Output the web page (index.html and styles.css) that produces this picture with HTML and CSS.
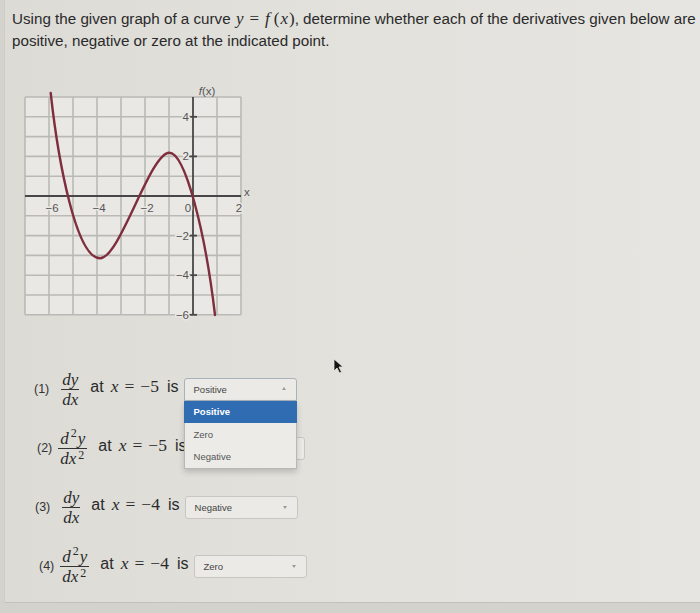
FILE: index.html
```html
<!DOCTYPE html>
<html>
<head>
<meta charset="utf-8">
<link rel="stylesheet" href="styles.css">
</head>
<body>
<div class="frame">
  <p class="intro">Using the given graph of a curve <span class="hm"><i>y</i><span class="eq">=</span><i class="fn">f</i>(<i class="vx">x</i>)</span>, determine whether each of the derivatives given below are positive, negative or zero at the indicated point.</p>

  <svg class="graph" width="260" height="244" viewBox="0 0 260 244">
    <rect x="15" y="17" width="216" height="217.8" fill="#e9e8e4"/>
    <g stroke="#bab9b5" stroke-width="1.6">
      <line x1="15" y1="17" x2="15" y2="234.8"/>
      <line x1="39" y1="17" x2="39" y2="234.8"/>
      <line x1="63" y1="17" x2="63" y2="234.8"/>
      <line x1="87" y1="17" x2="87" y2="234.8"/>
      <line x1="111" y1="17" x2="111" y2="234.8"/>
      <line x1="135" y1="17" x2="135" y2="234.8"/>
      <line x1="159" y1="17" x2="159" y2="234.8"/>
      <line x1="207" y1="17" x2="207" y2="234.8"/>
      <line x1="231" y1="17" x2="231" y2="234.8"/>
      <line x1="15" y1="17" x2="231" y2="17"/>
      <line x1="15" y1="36.8" x2="231" y2="36.8"/>
      <line x1="15" y1="56.6" x2="231" y2="56.6"/>
      <line x1="15" y1="76.4" x2="231" y2="76.4"/>
      <line x1="15" y1="96.2" x2="231" y2="96.2"/>
      <line x1="15" y1="135.8" x2="231" y2="135.8"/>
      <line x1="15" y1="155.6" x2="231" y2="155.6"/>
      <line x1="15" y1="175.4" x2="231" y2="175.4"/>
      <line x1="15" y1="195.2" x2="231" y2="195.2"/>
      <line x1="15" y1="215" x2="231" y2="215"/>
      <line x1="15" y1="234.8" x2="231" y2="234.8"/>
    </g>
    <g stroke="#474747" stroke-width="1.8">
      <line x1="15" y1="116" x2="231" y2="116"/>
      <line x1="183" y1="17" x2="183" y2="234.8"/>
      <line x1="179" y1="36.8" x2="187" y2="36.8"/>
      <line x1="179" y1="76.4" x2="187" y2="76.4"/>
      <line x1="179" y1="155.6" x2="187" y2="155.6"/>
      <line x1="179" y1="195.2" x2="187" y2="195.2"/>
      <line x1="179" y1="234.8" x2="187" y2="234.8"/>
    </g>
    <g font-size="11.5" fill="#555" stroke="#e9e8e4" stroke-width="3" paint-order="stroke">
      <text x="42" y="132" text-anchor="middle">−6</text>
      <text x="89" y="132" text-anchor="middle">−4</text>
      <text x="137" y="132" text-anchor="middle">−2</text>
      <text x="178" y="132" text-anchor="middle">0</text>
      <text x="229" y="132" text-anchor="middle">2</text>
      <text x="179" y="40.8" text-anchor="end">4</text>
      <text x="179" y="80.4" text-anchor="end">2</text>
      <text x="179" y="159.6" text-anchor="end">−2</text>
      <text x="179" y="199.2" text-anchor="end">−4</text>
      <text x="179" y="238.8" text-anchor="end">−6</text>
    </g>
    <text x="197" y="15" font-size="11.5" fill="#555" text-anchor="middle"><tspan font-style="italic">f</tspan>(x)</text>
    <text x="234" y="116" font-size="11.5" fill="#555">x</text>
    <path d="M40.7,13 C48,80 66,178.3 90,178.3 C110,178.3 140,72.7 159.3,72.7 C175,72.7 195,150 205,235" fill="none" stroke="#7f2e3d" stroke-width="2.4" stroke-linecap="round"/>
  </svg>

  <div class="qs">
    <div class="q q1">
      <span class="num">(1)</span>
      <span class="frac"><span class="top">dy</span><span class="bot">dx</span></span>
      <span class="txt">at<span class="m"><i>x</i><span class="eq">=</span>−5</span>is</span>
      <div class="sel-wrap">
        <div class="sel open">Positive<span class="caret up"></span></div>
        <ul class="menu">
          <li class="active">Positive</li>
          <li>Zero</li>
          <li>Negative</li>
        </ul>
      </div>
    </div>
    <div class="q q2">
      <span class="num">(2)</span>
      <span class="frac frac2"><span class="top">d<sup>2</sup>y</span><span class="bot">dx<sup>2</sup></span></span>
      <span class="txt">at<span class="m"><i>x</i><span class="eq">=</span>−5</span>is</span>
      <div class="sel-wrap">
        <div class="sel">Positive<span class="caret"></span></div>
      </div>
    </div>
    <div class="q q3">
      <span class="num">(3)</span>
      <span class="frac"><span class="top">dy</span><span class="bot">dx</span></span>
      <span class="txt">at<span class="m"><i>x</i><span class="eq">=</span>−4</span>is</span>
      <div class="sel-wrap">
        <div class="sel">Negative<span class="caret"></span></div>
      </div>
    </div>
    <div class="q q4">
      <span class="num">(4)</span>
      <span class="frac frac2"><span class="top">d<sup>2</sup>y</span><span class="bot">dx<sup>2</sup></span></span>
      <span class="txt">at<span class="m"><i>x</i><span class="eq">=</span>−4</span>is</span>
      <div class="sel-wrap">
        <div class="sel">Zero<span class="caret"></span></div>
      </div>
    </div>
  </div>

  <svg class="cursor" width="12" height="16" viewBox="0 0 12 16">
    <path d="M1,1 L1,13 L4,10 L6.5,15 L8.5,14 L6,9 L10,9 Z" fill="#151515" stroke="#e6e5e1" stroke-width="0.8"/>
  </svg>
</div>
</body>
</html>
```

FILE: styles.css
```css
html, body {
  margin: 0;
  padding: 0;
}
body {
  background: #d4d2cd;
  font-family: "Liberation Sans", Arial, sans-serif;
  color: #2a2a2a;
  width: 700px;
  height: 613px;
  overflow: hidden;
}
.frame {
  position: relative;
  margin-left: 4px;
  height: 603px;
  box-sizing: border-box;
  border-left: 1px solid #cfcdc8;
  border-bottom: 1px solid #c3c1bc;
  background: linear-gradient(90deg, #dcdbd6 0%, #e2e1dc 45%, #e6e5e1 100%);
}
.intro {
  margin: 0;
  padding: 8px 0 0 7px;
  font-size: 15.2px;
  line-height: 22px;
}
.hm {
  font-family: "Liberation Serif", "Times New Roman", serif;
  font-size: 17px;
  margin-left: 1px;
}
.hm .eq {
  margin: 0 6px;
}
.hm .fn {
  margin-right: 4px;
}
.hm .vx {
  margin: 0 1px;
}
.graph {
  display: block;
  margin: 28px 0 0 5px;
  font-family: "Liberation Sans", Arial, sans-serif;
}
.qs {
  margin-top: 45px;
}
.q {
  display: flex;
  align-items: center;
  height: 40px;
}
.q + .q {
  margin-top: 19px;
}
.q1 { padding-left: 29px; }
.q2 { padding-left: 32px; }
.q3 { padding-left: 30px; }
.q4 { padding-left: 34px; }
.num {
  font-size: 12.5px;
  color: #333;
}
.frac {
  display: inline-flex;
  flex-direction: column;
  align-items: center;
  font-family: "Liberation Serif", "Times New Roman", serif;
  font-style: italic;
  font-size: 17px;
  margin: 0 11px 0 12px;
  color: #2a2a2a;
}
.frac2 {
  margin-left: 6px;
}
.frac .top {
  line-height: 17px;
  padding: 0 1px 1px;
}
.frac .bot {
  border-top: 1px solid #333;
  line-height: 15px;
  padding: 2px 1px 0;
  align-self: stretch;
  text-align: center;
}
.frac2 .top,
.frac2 .bot {
  padding-left: 2px;
  padding-right: 2px;
}
.frac sup {
  font-style: normal;
  font-size: 12px;
  line-height: 0;
  vertical-align: 7px;
  margin: 0 1px 0 2px;
}
.frac .bot sup {
  vertical-align: 5px;
}
.txt {
  font-size: 16px;
  margin-right: 5px;
  margin-bottom: 5px;
  white-space: nowrap;
}
.txt .m {
  font-family: "Liberation Serif", "Times New Roman", serif;
  font-size: 17.5px;
  margin: 0 8px 0 7px;
}
.txt .m i {
  margin-right: 1px;
}
.txt .eq {
  margin: 0 6px 0 5px;
}
.sel-wrap {
  position: relative;
}
.sel {
  position: relative;
  width: 113px;
  height: 23px;
  box-sizing: border-box;
  border: 1px solid #c7c6c2;
  border-radius: 3px;
  background: #ebeae6;
  font-size: 9.5px;
  color: #444;
  display: flex;
  align-items: center;
  padding-left: 9px;
}
.sel.open {
  border-color: #a9b1ba;
  border-radius: 3px 3px 0 0;
}
.caret {
  position: absolute;
  right: 10px;
  top: 50%;
  margin-top: -1px;
  width: 0;
  height: 0;
  border-left: 2.5px solid transparent;
  border-right: 2.5px solid transparent;
  border-top: 3px solid #9a9a9a;
}
.caret.up {
  border-top: 0;
  border-bottom: 3px solid #9a9a9a;
  margin-top: -2px;
}
.menu {
  position: absolute;
  z-index: 5;
  top: 100%;
  left: 0;
  width: 113px;
  box-sizing: border-box;
  margin: 0;
  padding: 0;
  list-style: none;
  background: #ecebe7;
  border: 1px solid #b9b8b4;
  border-top: 0;
  box-shadow: 0 3px 6px rgba(0, 0, 0, 0.18);
}
.menu li {
  height: 22.5px;
  display: flex;
  align-items: center;
  padding-left: 9px;
  font-size: 9.5px;
  color: #555;
}
.menu li.active {
  background: #2f6cb2;
  color: #fff;
  font-weight: bold;
  margin: 0 -1px;
  padding-left: 10px;
}
.cursor {
  position: absolute;
  left: 328px;
  top: 358px;
}
```
